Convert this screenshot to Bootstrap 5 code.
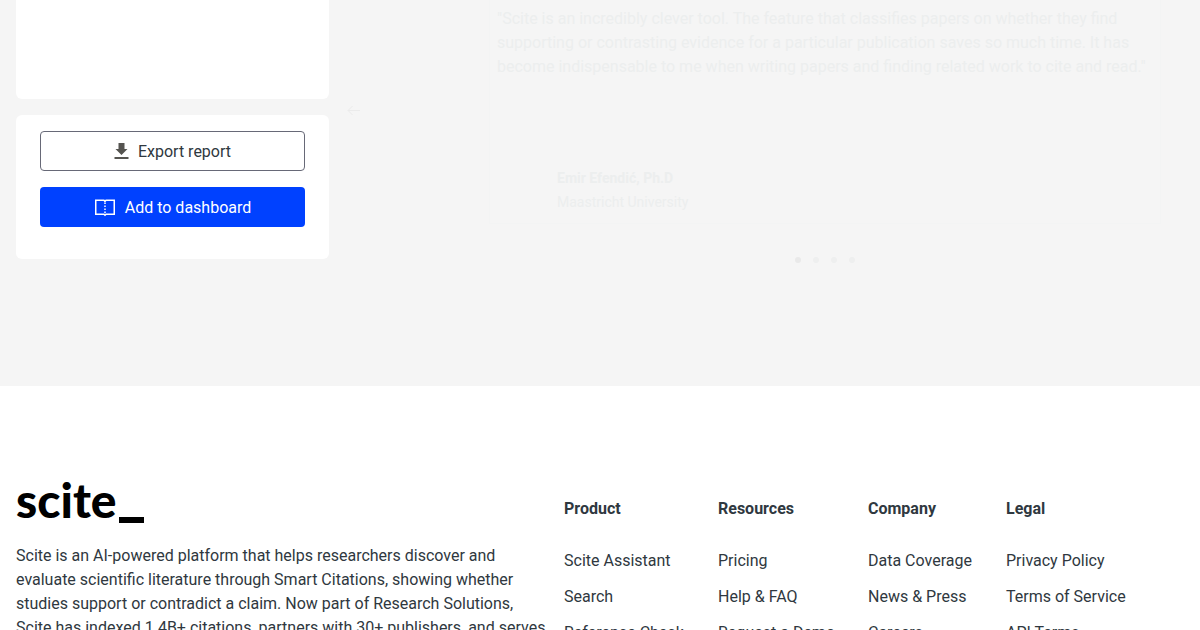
<!DOCTYPE html>
<html lang="en">
<head>
<meta charset="utf-8">
<meta name="viewport" content="width=device-width, initial-scale=1">
<title>Scite report</title>
<link href="https://cdn.jsdelivr.net/npm/bootstrap@5.3.0/dist/css/bootstrap.min.css" rel="stylesheet">
<style>
body { font-family: Roboto, "Liberation Sans", sans-serif; color: #2f3840; background: #fff; }
.report-area { background: #f5f5f5; padding-bottom: 123px; }
.report-row { display: grid; grid-template-columns: 313px minmax(0, 1fr); gap: 16px; align-items: start; }
.panel { background: #fff; border-radius: 6px; }
.panel-filters { height: 99px; border-top-left-radius: 0; border-top-right-radius: 0; }
.btn-report { height: 40px; border-radius: 4px; padding: 2px 0 0; display: flex; align-items: center; justify-content: center; }
.btn-export { border: 1px solid #676977; color: #2f3840; gap: 8px; }
.btn-dash, .btn-dash:hover { background: #0041ff; color: #fff; gap: 9px; }
.btn-prev { color: #ebebeb; margin-top: 102px; width: 16px; height: 16px; line-height: 0; }
.quote-col { width: 672px; margin-right: 23px; color: #eceeee; }
.quote-card { border: 1px solid #f3f4f4; border-top: 0; padding: 7px 7px 9px; }
.quote-by { padding: 87px 0 0 60px; font-size: 14px; line-height: 24px; }
.dots { gap: 12px; padding-top: 33px; }
.dot { width: 6px; height: 6px; background: #eeefef; }
.dot.active { background: #e9e9e9; }
.site-footer { padding-top: 88px; display: grid; grid-template-columns: minmax(0, 1fr) auto; gap: 16px; }
.brand { font-family: Lato, sans-serif; font-weight: 900; font-size: 48px; line-height: 52px; color: #000; }
.brand-bar { display: inline-block; width: 25px; height: 6px; margin-left: 2px; background: #000; vertical-align: -5px; }
.brand-text { margin-top: 18px; }
.link-grid { display: grid; grid-template-columns: 122px 118px 106px 178px; gap: 32px; padding-top: 23px; }
.link-grid h2 { font-size: 16px; line-height: 24px; font-weight: 700; margin-bottom: 28px; }
.link-grid li { margin-bottom: 12px; white-space: nowrap; }
.link-grid a { color: inherit; text-decoration: none; }
</style>
</head>
<body class="vh-100 overflow-hidden">
<main class="report-area px-3">
  <div class="report-row">
    <aside class="d-flex flex-column gap-3">
      <div class="panel panel-filters"></div>
      <div class="panel px-4 pt-3 pb-3">
        <button type="button" class="btn btn-report btn-export w-100 mb-3">
          <svg width="16" height="18" viewBox="0 1 16 18" fill="#555450"><path d="M4.500 1h6v6h3L7.500 13 1.500 7h3zM.5 15h14v2H.5z"/></svg>
          Export report
        </button>
        <button type="button" class="btn btn-report btn-dash border-0 w-100 mb-3">
          <svg width="22" height="18" viewBox="0 0 22 18" fill="none" stroke="#fff" stroke-width="1.500"><path d="M11 2.400 10 1.250H1.750v14H10l1 1 1-1h8.250v-14H12z"/><path d="M11 3.500v12.500" stroke-dasharray="1.500 1.500"/></svg>
          Add to dashboard
        </button>
      </div>
    </aside>
    <section class="d-flex justify-content-between align-items-start">
      <button type="button" class="btn btn-prev border-0 p-0" aria-label="Previous"><svg width="16" height="16" viewBox="0 0 16 16" fill="none" stroke="currentColor"><path d="M15 8.500H3M7.500 4 3 8.500 7.500 13"/></svg></button>
      <div class="quote-col">
        <div class="quote-card">
          <div>"Scite is an incredibly clever tool. The feature that classifies papers on whether they find<br>supporting or contrasting evidence for a particular publication saves so much time. It has<br>become indispensable to me when writing papers and finding related work to cite and read."</div>
          <div class="quote-by"><div class="fw-bold">Emir Efendić, Ph.D</div><div>Maastricht University</div></div>
        </div>
        <div class="dots d-flex justify-content-center"><span class="dot active rounded-circle"></span><span class="dot rounded-circle"></span><span class="dot rounded-circle"></span><span class="dot rounded-circle"></span></div>
      </div>
    </section>
  </div>
</main>
<footer class="site-footer px-3">
  <div>
    <div class="brand">scite<span class="brand-bar"></span></div>
    <p class="brand-text">Scite is an AI-powered platform that helps researchers discover and<br>evaluate scientific literature through Smart Citations, showing whether<br>studies support or contradict a claim. Now part of Research Solutions,<br>Scite has indexed 1.4B+ citations, partners with 30+ publishers, and serves</p>
  </div>
  <nav class="link-grid" aria-label="Footer">
    <div><h2>Product</h2><ul class="list-unstyled"><li><a href="#">Scite Assistant</a></li><li><a href="#">Search</a></li><li><a href="#">Reference Check</a></li></ul></div>
    <div><h2>Resources</h2><ul class="list-unstyled"><li><a href="#">Pricing</a></li><li><a href="#">Help &amp; FAQ</a></li><li><a href="#">Request a Demo</a></li></ul></div>
    <div><h2>Company</h2><ul class="list-unstyled"><li><a href="#">Data Coverage</a></li><li><a href="#">News &amp; Press</a></li><li><a href="#">Careers</a></li></ul></div>
    <div><h2>Legal</h2><ul class="list-unstyled"><li><a href="#">Privacy Policy</a></li><li><a href="#">Terms of Service</a></li><li><a href="#">API Terms</a></li></ul></div>
  </nav>
</footer>
<script src="https://cdn.jsdelivr.net/npm/bootstrap@5.3.0/dist/js/bootstrap.bundle.min.js"></script>
</body>
</html>
